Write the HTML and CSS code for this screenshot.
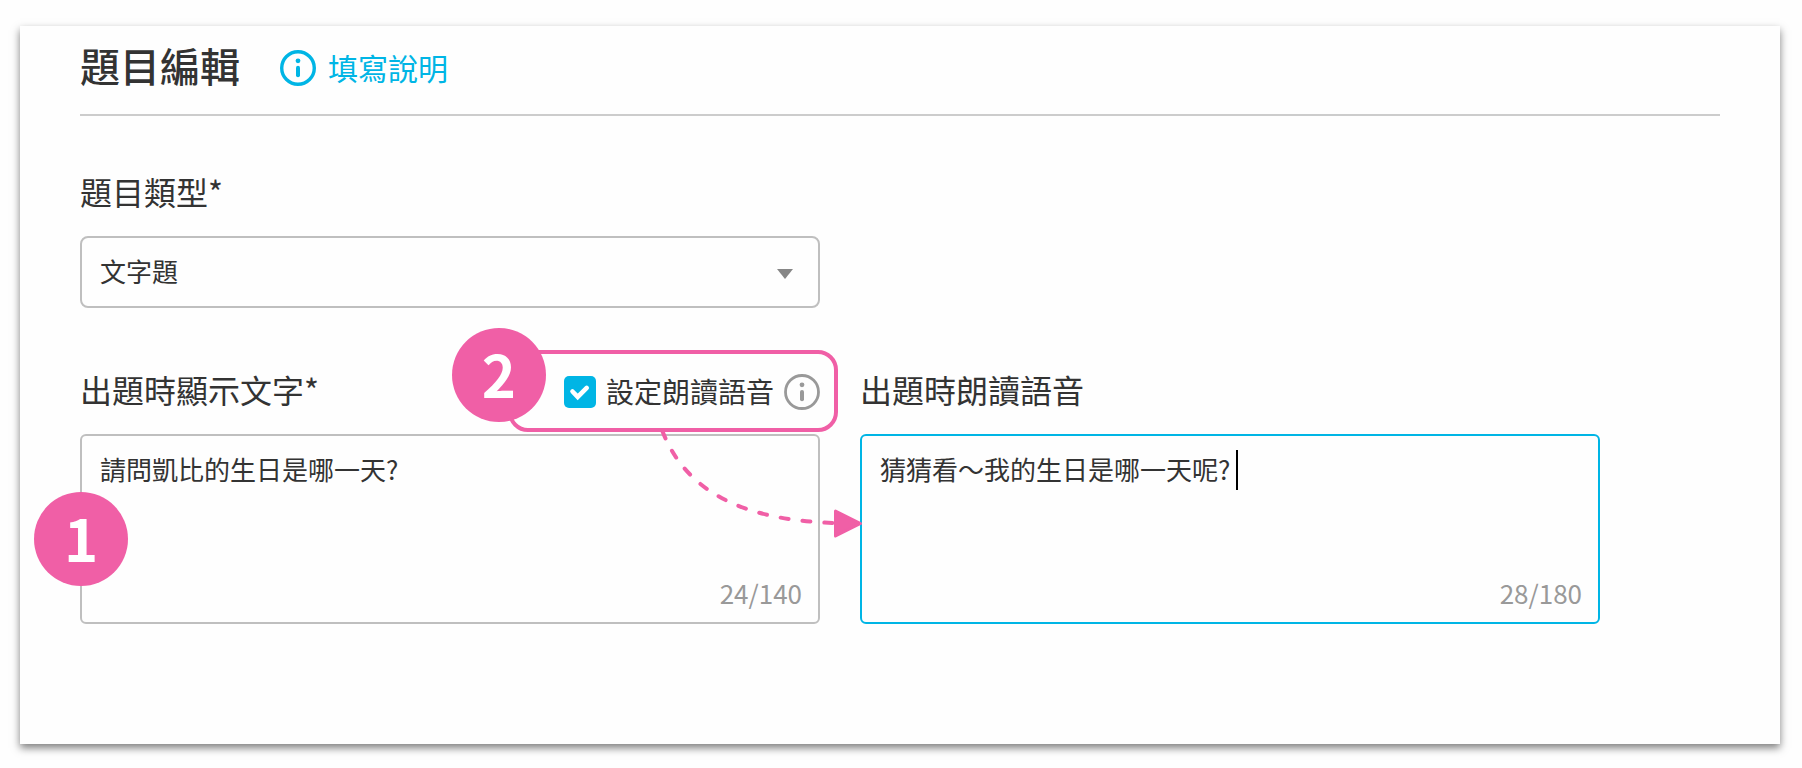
FILE: index.html
```html
<!DOCTYPE html>
<html lang="zh-Hant">
<head>
<meta charset="utf-8">
<title>題目編輯</title>
<link rel="stylesheet" href="styles.css">
</head>
<body>
<main class="card">
  <header class="card-header">
    <h1 class="title">題目編輯</h1>
    <a class="help" href="#help">
      <svg class="info" viewBox="0 0 36 36" aria-hidden="true">
        <circle cx="18" cy="18" r="16.3" fill="none" stroke="currentColor" stroke-width="3.4"/>
        <circle cx="18" cy="10.8" r="2.4" fill="currentColor"/>
        <path d="M18 17.7v7.6" stroke="currentColor" stroke-width="4" stroke-linecap="round"/>
      </svg>
      <span class="help-text">填寫說明</span>
    </a>
  </header>

  <form class="form">
    <div class="field">
      <div class="label-row"><label class="label" for="type">題目類型*</label></div>
      <div class="select-wrap">
        <select class="control select" id="type"><option>文字題</option></select>
        <svg class="arrow" viewBox="0 0 16 10" aria-hidden="true"><path d="M0 0h16L8 10z" fill="#868686"/></svg>
      </div>
    </div>

    <div class="field field-text">
      <div class="label-row">
        <label class="label" for="text">出題時顯示文字*</label>
        <div class="toggle">
          <span class="highlight"></span>
          <input class="check" type="checkbox" id="voice" checked>
          <svg class="tick" viewBox="0 0 32 32" aria-hidden="true"><path d="M8.500 15.500l5.200 5.400 9-9" fill="none" stroke="#fff" stroke-width="4.600" stroke-linecap="round"/></svg>
          <label class="toggle-label" for="voice">設定朗讀語音</label>
          <svg class="info info-muted" viewBox="0 0 36 36" aria-hidden="true">
            <circle cx="18" cy="18" r="16.5" fill="none" stroke="currentColor" stroke-width="2.8"/>
            <circle cx="18" cy="10.8" r="2.4" fill="currentColor"/>
            <path d="M18 18v7.2" stroke="currentColor" stroke-width="4" stroke-linecap="round"/>
          </svg>
          <span class="badge badge-two">2</span>
          <svg class="connector" viewBox="0 0 220 130" aria-hidden="true">
            <path d="M12 10C35 70 90 100 184 103" fill="none" stroke="#f05fa6" stroke-width="4" stroke-linecap="round" stroke-dasharray="8 14" stroke-dashoffset="-1"/>
            <path d="M185.500 91L210.500 103.500L185.500 116z" fill="#f05fa6" stroke="#f05fa6" stroke-width="3" stroke-linejoin="round"/>
          </svg>
        </div>
      </div>
      <div class="area-wrap">
        <textarea class="control area" id="text">請問凱比的生日是哪一天?</textarea>
        <span class="count">24/140</span>
        <span class="badge badge-one">1</span>
      </div>
    </div>

    <div class="field">
      <div class="label-row"><label class="label" for="speech">出題時朗讀語音</label></div>
      <div class="area-wrap">
        <textarea class="control area area-active" id="speech">猜猜看～我的生日是哪一天呢?</textarea>
        <span class="caret"></span>
        <span class="count">28/180</span>
      </div>
    </div>
  </form>
</main>
</body>
</html>
```
FILE: styles.css
```css
* {
  box-sizing: border-box;
}

body {
  margin: 0;
  padding: 26px 22px 24px 20px;
  background: #fefefe;
  color: #333;
  font-family: "Noto Sans CJK TC", sans-serif;
}

.card {
  padding: 0 60px 120px;
  background: #fefefe;
  box-shadow: 0 4px 8px rgba(0, 0, 0, 0.5);
}

.card-header {
  display: flex;
  align-items: flex-end;
  gap: 40px;
  padding: 9px 0 19px;
  border-bottom: 2px solid #ccc;
}

.title {
  margin: 0;
  font-size: 40px;
  font-weight: 500;
  line-height: 60px;
}

.help {
  display: flex;
  align-items: center;
  gap: 12px;
  color: #00b5e5;
  font-size: 30px;
  line-height: 52px;
  text-decoration: none;
}

.help-text {
  padding-bottom: 2px;
}

.info {
  display: block;
  flex: none;
  width: 36px;
  height: 36px;
}

.info-muted {
  color: #999;
}

.form {
  display: grid;
  grid-template-columns: 1fr 1fr;
  gap: 60px 40px;
  max-width: 1520px;
  padding-top: 54px;
}

.field-text {
  grid-column: 1;
}

.label-row {
  display: flex;
  align-items: center;
  justify-content: space-between;
  margin-bottom: 18px;
}

.label {
  padding-bottom: 6px;
  font-size: 32px;
  line-height: 42px;
}

.control {
  display: block;
  width: 100%;
  margin: 0;
  border: 2px solid #bfbfbf;
  border-radius: 8px;
  outline: none;
  background: #fefefe;
  color: #333;
  font-family: inherit;
  font-size: 26px;
  line-height: 40px;
}

.select-wrap,
.area-wrap {
  position: relative;
}

.select {
  height: 72px;
  padding: 0 60px 2px 18px;
  appearance: none;
}

.arrow {
  position: absolute;
  top: 33px;
  right: 27px;
  width: 16px;
  height: 10px;
  pointer-events: none;
}

.area {
  height: 190px;
  padding: 13px 18px;
  border-radius: 6px;
  resize: none;
}

.area-active {
  border-color: #00b5e5;
}

.count {
  position: absolute;
  right: 18px;
  bottom: 11px;
  color: #999;
  font-size: 26px;
  line-height: 40px;
}

.caret {
  position: absolute;
  top: 16px;
  left: 376px;
  width: 2px;
  height: 40px;
  background: #000;
}

.toggle {
  position: relative;
  z-index: 1;
  display: flex;
  align-items: center;
  height: 36px;
}

.check {
  width: 32px;
  height: 32px;
  margin: 0 10px 0 0;
  border-radius: 5px;
  background: #00b5e5;
  appearance: none;
}

.tick {
  position: absolute;
  top: 2px;
  left: 0;
  width: 32px;
  height: 32px;
  pointer-events: none;
}

.toggle-label {
  margin-right: 10px;
  padding-bottom: 2px;
  font-size: 28px;
  line-height: 36px;
}

.highlight {
  position: absolute;
  inset: -24px -18px -22px -56px;
  border: 4px solid #f05fa6;
  border-radius: 20px;
  pointer-events: none;
}

.badge {
  position: absolute;
  width: 94px;
  height: 94px;
  border-radius: 50%;
  background: #f05fa6;
  color: #fff;
  font-size: 58px;
  font-weight: 700;
  line-height: 90px;
  text-align: center;
}

.badge-two {
  top: -46px;
  left: -112px;
}

.badge-one {
  top: 58px;
  left: -46px;
}

.connector {
  position: absolute;
  top: 46px;
  left: 86px;
  width: 220px;
  height: 130px;
  pointer-events: none;
}
```
